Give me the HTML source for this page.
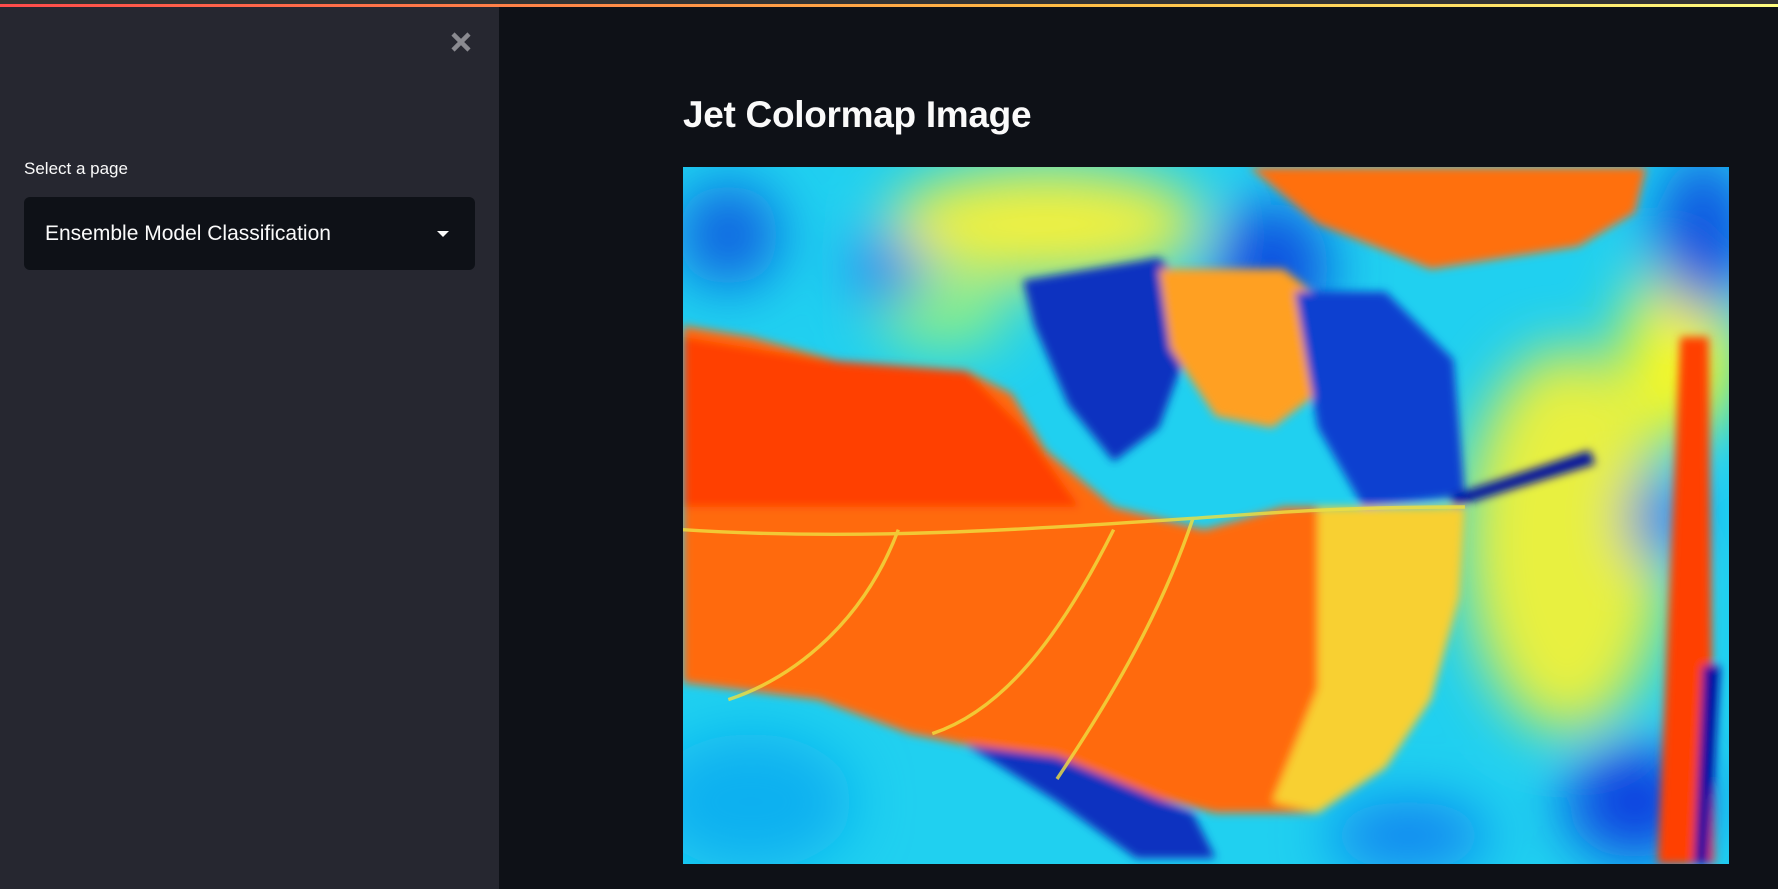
<!DOCTYPE html>
<html><head><meta charset="utf-8"><style>
html,body{margin:0;padding:0;width:1778px;height:889px;overflow:hidden;background:#0e1117;font-family:"Source Sans Pro","Liberation Sans",sans-serif}
.topgray{position:absolute;left:0;top:0;width:1778px;height:4px;background:#333}
.topline{position:absolute;left:0;top:4px;width:1778px;height:3px;background:linear-gradient(90deg,#ff4b4b,#ffbd45 60%,#fffd80)}
.side{position:absolute;left:0;top:7px;width:499px;height:882px;background:#262730}
.x{position:absolute;left:449px;top:30px;width:24px;height:24px}
.lbl{position:absolute;left:24px;top:159px;color:#fafafa;font-size:17px}
.sel{position:absolute;left:24px;top:197px;width:451px;height:73px;background:#0e1117;border-radius:6px}
.sel span{position:absolute;left:21px;top:25px;color:#fafafa;font-size:21px}
.caret{position:absolute;left:437px;top:231px;width:0;height:0;border-left:6px solid transparent;border-right:6px solid transparent;border-top:6px solid #fafafa}
h1{position:absolute;left:683px;top:94px;margin:0;color:#fafafa;font-size:37px;font-weight:bold;letter-spacing:-0.3px}
svg.img{position:absolute;left:683px;top:167px}
</style></head><body>
<div class="topgray"></div><div class="topline"></div>
<div class="side"></div>
<svg class="x" viewBox="0 0 24 24"><path d="M4 4L20 20M20 4L4 20" stroke="#8a8a90" stroke-width="4.5" stroke-linecap="butt"/></svg>
<div class="lbl">Select a page</div>
<div class="sel"><span>Ensemble Model Classification</span></div>
<div class="caret"></div>
<h1>Jet Colormap Image</h1>
<svg class="img" width="1046" height="697" viewBox="0 0 923 615" preserveAspectRatio="none">
<defs><filter id="b" x="-20%" y="-20%" width="140%" height="140%"><feGaussianBlur stdDeviation="25"/></filter>
<filter id="s"><feGaussianBlur stdDeviation="4"/></filter></defs>
<rect width="923" height="615" fill="#20d0f0"/>
<g filter="url(#b)">
<ellipse cx="320" cy="50" rx="140" ry="50" fill="#f0f040"/>
<ellipse cx="780" cy="330" rx="90" ry="170" fill="#e8f040"/>
<ellipse cx="880" cy="160" rx="50" ry="80" fill="#f8f820"/>
<ellipse cx="230" cy="130" rx="60" ry="30" fill="#90f080"/>
<ellipse cx="40" cy="60" rx="45" ry="45" fill="#1060e0"/>
<ellipse cx="180" cy="90" rx="30" ry="30" fill="#2070f0"/>
<ellipse cx="520" cy="90" rx="50" ry="60" fill="#1050e0"/>
<ellipse cx="900" cy="60" rx="40" ry="70" fill="#1050e0"/>
<ellipse cx="860" cy="310" rx="25" ry="40" fill="#1060f0"/>
<ellipse cx="840" cy="560" rx="60" ry="50" fill="#1040e0"/>
<ellipse cx="640" cy="590" rx="70" ry="30" fill="#1080f0"/>
<ellipse cx="60" cy="560" rx="90" ry="60" fill="#10b0f0"/>
</g>
<g filter="url(#s)">
<polygon points="500,0 850,0 840,40 790,70 660,90 560,50" fill="#ff7010"/>
<polygon points="0,140 60,150 150,175 250,180 290,200 320,250 380,300 420,310 460,320 530,300 610,300 690,300 685,380 660,470 620,530 560,570 470,570 350,540 250,510 200,500 120,470 40,460 0,455" fill="#ff6a08"/>
<polygon points="0,150 120,170 250,180 300,230 350,300 0,300" fill="#ff4000"/>
<polygon points="560,300 690,300 685,380 660,470 620,530 560,570 520,560 560,460" fill="#f8d030"/>
<polygon points="300,100 420,80 460,120 420,230 380,260 340,210 310,140" fill="#1030c0"/>
<polygon points="420,90 530,90 580,130 560,200 520,230 470,220 430,160" fill="#ffa020"/>
<polygon points="540,110 620,110 680,170 690,290 600,300 560,230" fill="#1040d0"/>
<polygon points="250,510 330,560 400,610 470,610 450,570 330,520" fill="#1030c0"/>
<polygon points="678,290 800,250 805,262 680,300" fill="#0010a0"/>
<polygon points="880,150 905,150 910,615 860,615" fill="#ff4000"/>
<polygon points="900,440 915,440 905,615 892,615" fill="#0010a0"/>
</g>
<g stroke="#f0e040" stroke-width="3" fill="none" opacity="0.8">
<path d="M0,320 C150,330 300,320 450,310 C520,305 580,300 690,300"/>
<path d="M190,320 C160,400 100,450 40,470"/>
<path d="M450,310 C420,400 370,480 330,540"/>
<path d="M380,320 C330,420 280,480 220,500"/>
</g>
</svg>
</body></html>
